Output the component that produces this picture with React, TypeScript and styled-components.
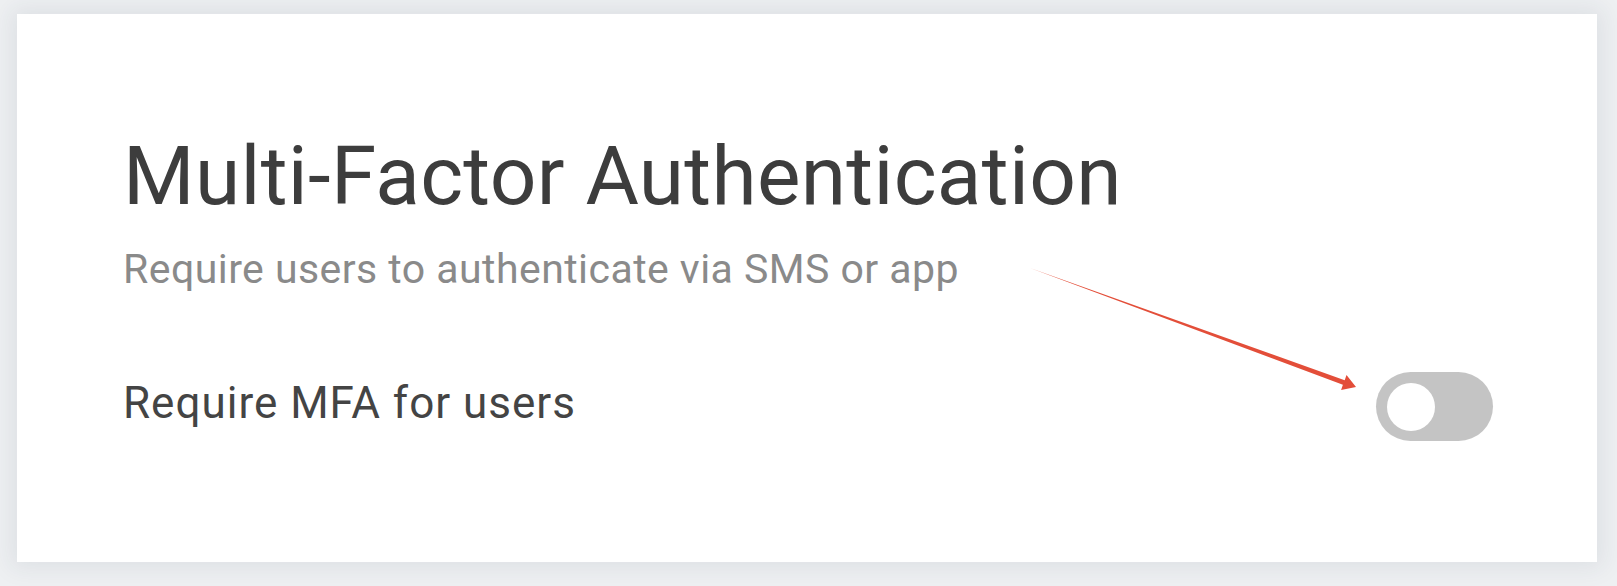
import React, { useState } from "react";
import styled, { createGlobalStyle } from "styled-components";

const GlobalStyle = createGlobalStyle`
  html, body {
    margin: 0;
    padding: 0;
    background: #eef0f2;
  }
  body {
    font-family: Roboto, "Liberation Sans", Arial, sans-serif;
  }
`;

const Page = styled.div`
  padding: 14px 20px 24px 17px;
`;

const Card = styled.section`
  position: relative;
  width: 1580px;
  height: 548px;
  box-sizing: border-box;
  padding: 121px 104px 121px 106px;
  background: #ffffff;
  box-shadow: 0 0 22px 6px rgba(40, 55, 75, 0.08);
`;

const Title = styled.h1`
  margin: 0;
  font-size: 82px;
  line-height: 1;
  font-weight: 400;
  letter-spacing: 0.3px;
  color: #3d3d3d;
`;

const Subtitle = styled.p`
  margin: 32px 0 0;
  font-size: 41px;
  line-height: 1;
  letter-spacing: 0.45px;
  color: #8a8a8a;
`;

const Row = styled.div`
  margin-top: 82px;
  display: flex;
  align-items: center;
  justify-content: space-between;
  height: 69px;
`;

const Label = styled.span`
  font-size: 44px;
  line-height: 1;
  letter-spacing: 1px;
  padding-bottom: 8px;
  color: #444444;
`;

const Track = styled.button<{ $on: boolean }>`
  width: 117px;
  height: 69px;
  border: 0;
  padding: 0 11px;
  border-radius: 35px;
  background: ${(p) => (p.$on ? "#4caf50" : "#c4c4c4")};
  display: flex;
  align-items: center;
  justify-content: ${(p) => (p.$on ? "flex-end" : "flex-start")};
  cursor: pointer;
`;

const Knob = styled.span`
  width: 48px;
  height: 48px;
  border-radius: 50%;
  background: #ffffff;
`;

const Annotation = styled.svg`
  position: absolute;
  left: 0;
  top: 0;
  width: 100%;
  height: 100%;
  pointer-events: none;
`;

const Arrow = () => (
  <Annotation viewBox="0 0 1580 548">
    <polygon
      points="1013,254 1327.7,366.2 1329.5,361 1339,373 1324.1,376 1325.9,370.8"
      fill="#e34e39"
    />
  </Annotation>
);

const App = () => {
  const [mfa, setMfa] = useState(false);

  return (
    <>
      <GlobalStyle />
      <Page>
        <Card>
          <Title>Multi-Factor Authentication</Title>
          <Subtitle>Require users to authenticate via SMS or app</Subtitle>
          <Row>
            <Label>Require MFA for users</Label>
            <Track $on={mfa} onClick={() => setMfa(!mfa)} aria-label="Require MFA for users">
              <Knob />
            </Track>
          </Row>
          <Arrow />
        </Card>
      </Page>
    </>
  );
};

export default App;
